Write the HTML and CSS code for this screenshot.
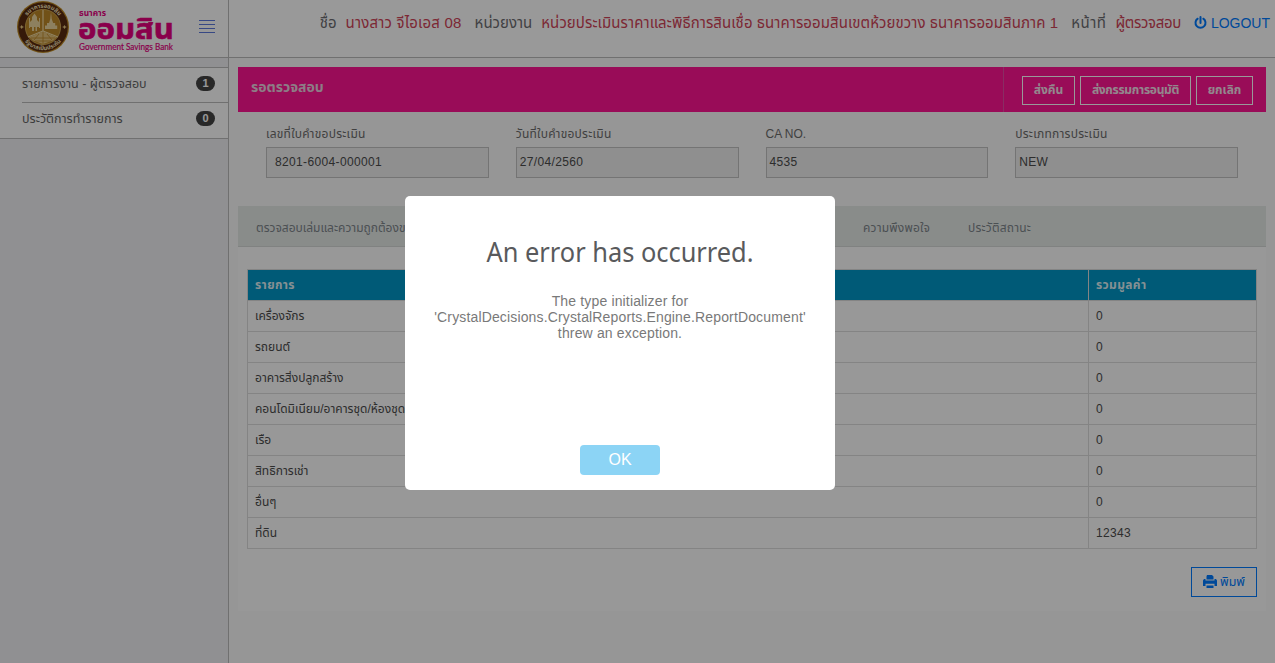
FILE: index.html
```
<!DOCTYPE html>
<html lang="th">
<head>
<meta charset="utf-8">
<title>Government Savings Bank</title>
<link rel="stylesheet" href="styles.css">
</head>
<body>
<div class="app">
  <aside class="sidebar">
    <div class="brand">
      <svg class="seal" viewBox="0 0 52 52" width="52" height="52">
        <defs>
          <path id="arc-top" d="M6.800 26a19.200 19.200 0 0 1 38.400 0"/>
          <path id="arc-bottom" d="M2.800 26a23.200 23.200 0 0 0 46.400 0"/>
        </defs>
        <circle cx="26" cy="26" r="26" fill="#be8a24"/>
        <circle cx="26" cy="26" r="24.8" fill="#592b10"/>
        <circle cx="26" cy="26" r="17.6" fill="#bd8727" stroke="#dcb860" stroke-width=".8"/>
        <text class="seal-text"><textPath href="#arc-top" startOffset="50%" text-anchor="middle">ธนาคารออมสิน</textPath></text>
        <text class="seal-text"><textPath href="#arc-bottom" startOffset="50%" text-anchor="middle">รัฐบาลเป็นประกัน</textPath></text>
        <path d="M4.700 24l1 1.500 1.500 .5-1.500 .5-1 1.500-1-1.500-1.500-.5 1.500-.5zM47.500 24l1 1.500 1.500 .5-1.500 .5-1 1.500-1-1.500-1.500-.5 1.500-.5z" fill="#e8c882"/>
        <path d="M26 30V9M26 30L11 36M26 30l15 6" stroke="#f0dca6" stroke-width="1.200"/>
        <path d="M15 16l2.500-3.500 2.500 3.500v3l2 2v5h-2v4h-1.500v-4h-1.500v4H15v-4h-2v-5l2-2z" fill="#ecd59e"/>
        <path d="M12.500 17v10M22.500 17v10" stroke="#ecd59e"/>
        <path d="M34 11l.7 7 1.500 4h2v2.500h2V28H28v-3.500h2V22h2l1.300-4z" fill="#ecd59e"/>
        <path d="M12.500 36L26 30.500 39.500 36l-3.500 3.500-10 3.500-10-3.500z" fill="#e1c07a"/>
        <path d="M14 37h24M18 40h16M22 33l-5 6M26 31v12M30 33l5 6" stroke="#bd8727" stroke-width=".8"/>
      </svg>
      <svg class="wordmark" viewBox="0 0 98 46" width="98" height="46">
        <text class="wm-small" x="1" y="7.500" textLength="27" lengthAdjust="spacingAndGlyphs">ธนาคาร</text>
        <text class="wm-large" x="0" y="31" textLength="96" lengthAdjust="spacingAndGlyphs">ออมสิน</text>
        <text class="wm-en" x="1" y="42" textLength="94" lengthAdjust="spacingAndGlyphs">Government Savings Bank</text>
      </svg>
      <span class="burger"><i></i><i></i><i></i><i></i></span>
    </div>
    <nav class="menu">
      <a class="menu-item"><span>รายการงาน - ผู้ตรวจสอบ</span><b class="count">1</b></a>
      <a class="menu-item"><span>ประวัติการทำรายการ</span><b class="count">0</b></a>
    </nav>
  </aside>
  <div class="main">
    <header class="topbar">
      <span class="key">ชื่อ</span><span class="val name">นางสาว จีไอเอส 08</span>
      <span class="key">หน่วยงาน</span><span class="val unit">หน่วยประเมินราคาและพิธีการสินเชื่อ ธนาคารออมสินเขตห้วยขวาง ธนาคารออมสินภาค 1</span>
      <span class="key duty">หน้าที่</span><span class="val role">ผู้ตรวจสอบ</span>
      <a class="logout"><svg width="13" height="14" viewBox="0 0 13 14"><path d="M6.500 1v6M3.700 2.700a5 5 0 1 0 5.600 0" fill="none" stroke="currentColor" stroke-width="2" stroke-linecap="round"/></svg><span>LOGOUT</span></a>
    </header>
    <section class="panel">
      <div class="panel-head">
        <h1>รอตรวจสอบ</h1>
        <div class="actions">
          <button class="btn b1">ส่งคืน</button><button class="btn b2">ส่งกรรมการอนุมัติ</button><button class="btn b3">ยกเลิก</button>
        </div>
      </div>
      <div class="form">
        <label class="field"><span>เลขที่ใบคำขอประเมิน</span><div class="input wide">8201-6004-000001</div></label>
        <label class="field"><span>วันที่ใบคำขอประเมิน</span><div class="input">27/04/2560</div></label>
        <label class="field"><span class="latin">CA NO.</span><div class="input">4535</div></label>
        <label class="field"><span>ประเภทการประเมิน</span><div class="input">NEW</div></label>
      </div>
      <div class="tabs"><span class="tab first">ตรวจสอบเล่มและความถูกต้องของ</span><span class="tab">ความพึงพอใจ</span><span class="tab">ประวัติสถานะ</span></div>
      <div class="body">
        <table class="grid">
          <thead><tr><th>รายการ</th><th class="total">รวมมูลค่า</th></tr></thead>
          <tbody>
            <tr><td>เครื่องจักร</td><td>0</td></tr>
            <tr><td>รถยนต์</td><td>0</td></tr>
            <tr><td>อาคารสิ่งปลูกสร้าง</td><td>0</td></tr>
            <tr><td>คอนโดมิเนียม/อาคารชุด/ห้องชุด</td><td>0</td></tr>
            <tr><td>เรือ</td><td>0</td></tr>
            <tr><td>สิทธิการเช่า</td><td>0</td></tr>
            <tr><td>อื่นๆ</td><td>0</td></tr>
            <tr><td>ที่ดิน</td><td class="num">12343</td></tr>
          </tbody>
        </table>
        <button class="print"><svg width="14" height="13" viewBox="0 0 14 13"><path fill="currentColor" fill-rule="evenodd" d="M4 0h5l1.500 1.500V4.500H3.500V1.500zM1 4h1.500v1.500h9V4H13l1 1.500V11h-2.500V8.800h-9V11H0V5.500zM3.500 10.500h7V13h-7z"/></svg><span>พิมพ์</span></button>
      </div>
    </section>
  </div>
</div>
<div class="overlay">
  <div class="dialog">
    <h2>An error has occurred.</h2>
    <p>The type initializer for 'CrystalDecisions.CrystalReports.Engine.ReportDocument' threw an exception.</p>
    <button class="ok">OK</button>
  </div>
</div>
</body>
</html>
```
FILE: styles.css
```
* { box-sizing: border-box; }
body { margin: 0; height: 663px; overflow: hidden; background: #fafafa; font: 12px/16px "Liberation Sans", "Noto Sans Thai", sans-serif; color: #555; }
button { font: inherit; padding: 0; background: none; white-space: nowrap; }
.app { display: flex; height: 663px; }

.sidebar { width: 229px; flex: none; border-right: 1px solid #bbb; background: #f0f0f3; }
.brand { height: 58px; display: flex; align-items: flex-start; padding: 1px 13px 0 17px; background: #fff; border-bottom: 1px solid #bbb; }
.wordmark { margin: 7px 0 0 9px; overflow: visible; }
.seal-text { font-size: 5.800px; font-weight: bold; fill: #f3e3bb; }
.wm-small { font-size: 9px; font-weight: bold; fill: #e6007e; }
.wm-large { font-size: 29px; font-weight: bold; fill: #e6007e; stroke: #e6007e; stroke-width: .6; }
.wm-en { font: 9px Lato, sans-serif; fill: #e6007e; stroke: #e6007e; stroke-width: .2; }
.burger { display: grid; gap: 3px; width: 16px; margin: 19px 0 0 auto; }
.burger i { height: 1px; background: #5c78dc; }
.menu { margin-top: 9px; background: #fff; border: solid #bbb; border-width: 1px 0; padding-left: 22px; }
.menu-item { height: 34px; display: flex; align-items: center; justify-content: space-between; padding: 0 13px 3px 0; color: #666; font-size: 12.500px; }
.menu-item + .menu-item { height: 36px; padding-bottom: 4px; border-top: 1px solid #bbb; }
.count { min-width: 19px; height: 15px; border-radius: 8px; background: #444; color: #fff; font-size: 11px; line-height: 15px; text-align: center; }

.main { flex: 1; min-width: 0; }
.topbar { height: 58px; border-bottom: 1px solid #bbb; background: #fff; display: flex; justify-content: flex-end; align-items: flex-start; padding: 15px 5px 0 0; font-size: 15px; white-space: nowrap; }
.key { color: #6c6c70; margin-right: 9px; }
.val { color: #cf4358; margin-right: 13px; }
.name { letter-spacing: .2px; }
.unit { letter-spacing: .08px; }
.duty { letter-spacing: .5px; }
.role { letter-spacing: -.35px; }
.logout { color: #007bff; display: flex; gap: 4px; align-items: center; font-size: 14px; }

.panel { margin: 9px 9px 0; background: #fdfdfd; }
.panel-head { height: 45px; background: #ff1493; display: flex; justify-content: space-between; }
.panel-head h1 { margin: 12px 0 0 13px; font-size: 14px; line-height: 16px; color: #ecd0df; }
.actions { display: flex; gap: 5px; padding: 9px 13px 0 18px; border-left: 1px solid #e64aa5; }
.btn { height: 29px; border: 1px solid #fff; color: #f6e2ec; font-weight: bold; padding-bottom: 2px; }
.b1 { width: 53px; }
.b2 { width: 111px; letter-spacing: -.3px; }
.b3 { width: 57px; }
.form { height: 94px; padding: 14px 28px 0; background: #fafafa; display: grid; grid-template-columns: repeat(4, 1fr); gap: 27px; }
.field { display: flex; flex-direction: column; gap: 5px; color: #6c6c6c; white-space: nowrap; letter-spacing: .25px; }
.latin { letter-spacing: 0; }
.input { height: 31px; border: 1px solid #c2c2c2; background: #eee; padding: 6px 3px; color: #4c4c4c; letter-spacing: .35px; }
.input.wide { padding-left: 8px; }
.tabs { height: 41px; background: #e5e9e7; border-bottom: 1px solid #d5d9d7; padding: 14px 18px 0; display: flex; gap: 38px; color: #7d858a; white-space: nowrap; }
.tab { letter-spacing: .2px; }
.tab.first { width: 569px; letter-spacing: 0; }
.body { height: 364px; padding: 22px 9px 0; display: flex; flex-direction: column; align-items: flex-end; gap: 18px; }
.grid { width: 1010px; border-collapse: collapse; table-layout: fixed; }
.grid th, .grid td { height: 31px; padding: 0 7px; border: 1px solid #ddd; text-align: left; color: #4c4c4c; }
.grid th { background: #0096c6; color: #dff0f6; letter-spacing: .35px; }
.grid .num { letter-spacing: .35px; }
.grid .total { width: 168px; }
.print { width: 66px; height: 30px; border: 1px solid #007bff; color: #007bff; display: flex; align-items: center; justify-content: center; gap: 3px; font-size: 12.500px; }
.print svg { margin-bottom: 2px; }

.overlay { position: fixed; inset: 0; background: rgba(0, 0, 0, .4); }
.dialog { position: absolute; left: 405px; top: 196px; width: 430px; height: 294px; padding: 36px 17px 15px; border-radius: 5px; background: #fff; display: flex; flex-direction: column; align-items: center; text-align: center; }
.dialog h2 { margin: 0; font: 27px/40px "Noto Sans", sans-serif; color: #595a5c; transform: scaleX(.94); }
.dialog p { margin: 21px 0 0; font-size: 14px; line-height: 16px; letter-spacing: .15px; color: #797979; }
.ok { margin-top: auto; width: 80px; height: 30px; border: 0; border-radius: 4px; background: #8cd4f5; color: #fff; font-size: 16px; }
```
